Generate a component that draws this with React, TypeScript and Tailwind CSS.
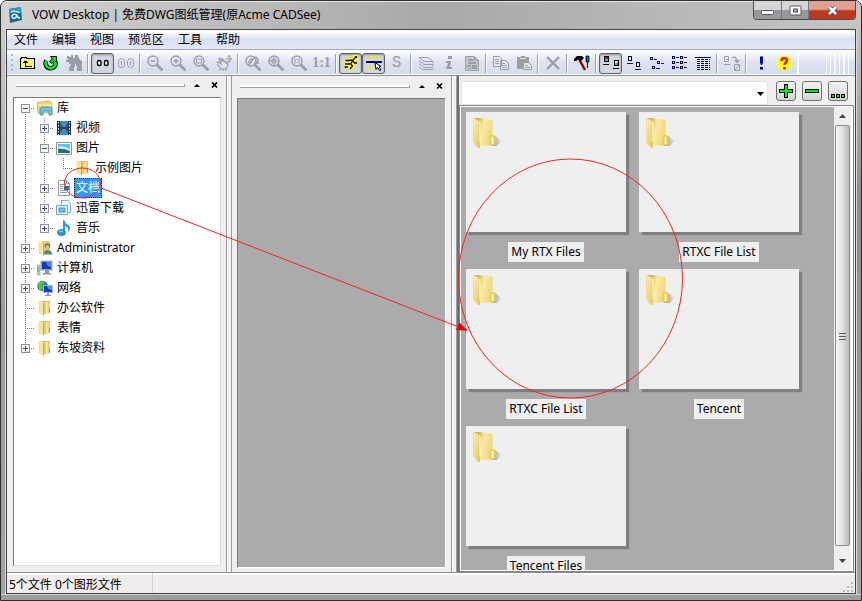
import type { ReactNode } from "react"

const GRAY = "#9c9ea3"
const NAVY = "#000080"

const menus = ["文件", "编辑", "视图", "预览区", "工具", "帮助"]

type TreeItem = {
  name: string
  icon: ReactNode
  lines: string[]
  selected?: boolean
}

type Tool = { label: string; icon: ReactNode; pressed?: boolean }

function Icon({ children, size = 16 }: { children: ReactNode; size?: number }) {
  return (
    <svg width={size} height={size} viewBox="0 0 16 16" fill="none" className="block shrink-0" aria-hidden="true">
      {children}
    </svg>
  )
}

/* Toolbar icons */

function FolderUpIcon() {
  return (
    <Icon>
      <g shapeRendering="crispEdges">
        <path d="M.5 13.500v-10h1v-1h5v1h8v10z" fill="#fff45c" stroke="#000" />
        <path d="M2 5h1v1H2zM9 5h1v1H9zM12 5h1v1h-1zM2 9h1v1H2zM12 9h1v1h-1zM10 7h1v1h-1z" fill="#fff" />
        <path d="M5 6h1v5h6v1H5zM4 6h3v1H4zM3 7h5v1H3z" fill="#000" />
      </g>
    </Icon>
  )
}

function RefreshIcon() {
  return (
    <Icon>
      <path d="M3.500 5.500A5 5 0 1 0 12.500 7" stroke="#000" strokeWidth="4.600" />
      <path d="M7.500 1.500h6v6l-2-2-2.500 3-2.500-2 3-2.500z" fill="#00e82c" stroke="#000" />
      <path d="M3.500 5.500A5 5 0 1 0 12.500 7" stroke="#00e82c" strokeWidth="2.800" />
    </Icon>
  )
}

function BinocularsIcon() {
  return (
    <Icon>
      <path
        d="M1 1h2v1h2V0h2v3h2V0h3l1 4 3 3v9h-5v-5h-1v-2H9v3H8v4H3v-3l2-4H3V7H0V5h2V4H1z"
        fill={GRAY}
        shapeRendering="crispEdges"
      />
    </Icon>
  )
}

function RingsIcon({ color }: { color: string }) {
  const faded = color !== "#000"
  return (
    <Icon>
      {faded ? (
        <g stroke={color}>
          <rect x=".5" y="3.500" width="6" height="9" rx="3" />
          <rect x="9.500" y="3.500" width="6" height="9" rx="3" />
          <path d="M3.500 6v4M12.500 6v4" />
        </g>
      ) : (
        <g stroke={color} strokeWidth="1.400">
          <rect x="2.500" y="5.500" width="3.500" height="5" rx="1.500" fill="#fff" />
          <rect x="9.500" y="5.500" width="3.500" height="5" rx="1.500" fill="#fff" />
        </g>
      )}
    </Icon>
  )
}

function LensIcon({ children }: { children?: ReactNode }) {
  return (
    <Icon>
      <circle cx="6" cy="6" r="5" stroke={GRAY} strokeWidth="1.400" />
      <path d="M9.500 9.500l6 6" stroke={GRAY} strokeWidth="2.800" />
      <g stroke={GRAY}>{children}</g>
    </Icon>
  )
}

function PanIcon() {
  return (
    <Icon>
      <path
        d="M1 8l1-1 3 2-2-5 1-1 2 4M6 7V4h1l1 3M8 7l1-1 1 2 1-1 1 4-2 3H5L1 9"
        stroke={GRAY}
        strokeWidth="1.200"
      />
      <path d="M13 0v8M9.500 4h6.500M11.500 2L13 .5 14.500 2M14.500 2.500L16 4l-1.500 1.500M11.500 6L13 7.500 14.500 6" stroke={GRAY} />
      <path d="M3 15h8" stroke={GRAY} strokeDasharray="2 1" />
    </Icon>
  )
}

function RunnerIcon() {
  return (
    <Icon>
      <path d="M10 0h5v6h-3l1 3-4 6H5v-2H1V9h1V3h7z" fill="#ffff00" stroke="#f4ea00" strokeDasharray="1 1" />
      <path d="M12.500 2.500L10 5 6 5.500H2.500M10 5L7.500 9H2M7.500 8.500l2 2.500L7 14M10 6l1.500 2H14M1.500 12h3.500" stroke={NAVY} strokeWidth="1.300" />
      <path d="M12 1h2v2h-2z" fill={NAVY} />
    </Icon>
  )
}

function RulerIcon() {
  return (
    <Icon>
      <path d="M1 2.500h14M1 12.500h9" stroke="#f4e600" strokeWidth="3" strokeDasharray="1.500 1.500" />
      <path d="M0 6h16v2H0z" fill={NAVY} />
      <path d="M9 7.500l6 4-2 .5 2 3-1.500 .5-2-3-1.500 2z" fill="#fff" stroke="#000" />
    </Icon>
  )
}

function LayersIcon() {
  return (
    <Icon>
      <path
        d="M1 2.500h9l5 4H6zM1 5.500l5 4h9M1 8.500l5 4h9M1 11.500l3 3h11M15 6.500v2M15 9.500v2"
        stroke={GRAY}
      />
    </Icon>
  )
}

function InfoIcon() {
  return (
    <Icon>
      <path d="M7 1h4v3H7zM5 6h5l-1 6h2v2H5v-2h1l1-4H5z" fill={GRAY} />
    </Icon>
  )
}

function SheetIcon() {
  return (
    <Icon>
      <path d="M1.500 1.500h9l4 4v10h-13z" fill="#c3c6cf" stroke={GRAY} />
      <path d="M4 4h5v2H4zM4 7h8v2H4zM3 10h4v2H3zM8 10h5v4H8zM4 13h3v1H4z" fill={GRAY} />
      <path d="M10.500 1.500v4h4" stroke={GRAY} />
    </Icon>
  )
}

function CopyIcon() {
  return (
    <Icon>
      <path d="M.5 1.500h6l2 2v8h-8zM7.500 5.500h5l3 3v6h-8z" fill="#e6e9f4" stroke={GRAY} />
      <path d="M2 4.500h4M2 6.500h4M2 8.500h4M9 8.500h3M9 10.500h5M9 12.500h5" stroke={GRAY} />
    </Icon>
  )
}

function PasteIcon() {
  return (
    <Icon>
      <path d="M1 2h4V1h4v1h4v12H1z" fill={GRAY} />
      <path d="M4 3.500h6" stroke="#e6e9f4" />
      <path d="M7.500 7.500h5l3 3v4h-8z" fill="#e6e9f4" stroke={GRAY} />
      <path d="M9 10.500h3M9 12.500h5" stroke={GRAY} />
    </Icon>
  )
}

function DeleteIcon() {
  return (
    <Icon>
      <path d="M2 2l12 12M14 2L2 14" stroke={GRAY} strokeWidth="2.400" />
    </Icon>
  )
}

function HammerIcon() {
  return (
    <Icon>
      <path d="M5 4l6 11" stroke="#8b0000" strokeWidth="2.400" />
      <path d="M0 6V4l3-3h5l2 2-3 3-2-2-3 2z" fill="#000" />
      <path d="M12 1h3v6h-3z" fill="#008a00" stroke="#000" strokeWidth=".7" />
      <path d="M12.500 2v4" stroke="#0000c0" />
      <path d="M13.500 7v6" stroke="#222" strokeWidth="1.200" />
    </Icon>
  )
}

function ThumbnailsIcon() {
  return (
    <Icon>
      <g shapeRendering="crispEdges">
        <path d="M1.500 1.500h4v5h-4zM11.500 5.500h4v5h-4z" fill="#fff" stroke="#000" />
        <path d="M2 2h3v2H2z" fill="#e00000" />
        <path d="M2 4h3v2H2z" fill="#00d8e8" />
        <path d="M12 8h2v2h-2z" fill="#00d8e8" />
        <path d="M14 7h1v3h-1z" fill="#00a000" />
        <path d="M0 9.500h6M10 13.500h6" stroke="#000" />
      </g>
    </Icon>
  )
}

function LargeIconsIcon() {
  return (
    <Icon>
      <g shapeRendering="crispEdges">
        <path d="M2.500 1.500h3v4h-3zM10.500 7.500h3v4h-3z" fill="#fff" stroke={NAVY} />
        <path d="M1 8.500h6M9 14.500h6" stroke="#222" />
      </g>
    </Icon>
  )
}

function SmallIconsIcon() {
  return (
    <Icon>
      <g shapeRendering="crispEdges">
        <path d="M1.500 2.500h2v2h-2zM8.500 6.500h2v2h-2zM3.500 11.500h2v2h-2z" fill="#fff" stroke={NAVY} />
        <path d="M5 4h3M12 8h3M7 13h4" stroke="#222" />
      </g>
    </Icon>
  )
}

function ListIcon() {
  return (
    <Icon>
      <g shapeRendering="crispEdges">
        <path
          d="M.5 1.500h2v2h-2zM8.500 1.500h2v2h-2zM.5 6.500h2v2h-2zM8.500 6.500h2v2h-2zM.5 11.500h2v2h-2zM8.500 11.500h2v2h-2z"
          fill="#fff"
          stroke={NAVY}
        />
        <path d="M4 2.500h3M12 2.500h3M4 7.500h3M12 7.500h3M4 12.500h3M12 12.500h3" stroke="#222" />
      </g>
    </Icon>
  )
}

function DetailsIcon() {
  return (
    <Icon>
      <g shapeRendering="crispEdges">
        <path d="M0 2h16v1H0z" fill={NAVY} />
        <path d="M2 4.500h13M2 6.500h13M2 8.500h13M2 10.500h13M2 12.500h13M2 14.500h13" stroke="#111" strokeDasharray="3 1" />
      </g>
    </Icon>
  )
}

function ConvertIcon() {
  return (
    <Icon>
      <path d="M.5 1.500h4v5h-4zM10.500 9.500h5v6h-5z" stroke={GRAY} />
      <path d="M2 4.500h2M0 9.500h6M11 15l4-5" stroke={GRAY} />
      <path d="M8 3c3-2 5 0 5 4M10.500 5l2.500 2.500L15.500 5" stroke={GRAY} strokeWidth="1.500" />
    </Icon>
  )
}

function AlertIcon() {
  return (
    <Icon>
      <path d="M7 1.500h3v6l-1 2.500H8L7 7.500zM7 12h3v2.500H7z" fill="#0000a0" />
    </Icon>
  )
}

function HelpIcon() {
  return (
    <Icon>
      <circle cx="8" cy="8" r="7.300" fill="#ffff00" stroke="#fff78a" strokeDasharray="1 1" />
      <path d="M5.500 6c0-4 5.500-3.500 5.500-.5 0 2-2.500 2-2.500 4.500M8.500 12v2.500" stroke="#e81010" strokeWidth="2.400" />
    </Icon>
  )
}

/* Tree icons */

function LibraryIcon() {
  return (
    <Icon>
      <path d="M0 3l1-1h5l1-1h6l1 2h1v10H1z" fill="#f3d56c" stroke="#c9a53c" strokeWidth=".7" />
      <path d="M1 5h14" stroke="#fff3b8" />
      <path d="M3 15V9q0-2 2-2h7q3 0 3 3v5h-3v-4H6v4z" fill="#6cc4ea" stroke="#2e8fc2" strokeWidth=".8" />
    </Icon>
  )
}

function VideoIcon() {
  return (
    <Icon>
      <path d="M1 1h14v14H1z" fill="#26333f" />
      <path d="M4 1h8v14H4z" fill="#2f8fd0" />
      <path d="M4 3l4 5-4 5zM12 3L8 8l4 5z" fill="#1d5b96" />
      <path d="M6 4l2 2 2-2M6 11l2-2 2 2" stroke="#c9734e" />
      <path d="M4 8h8" stroke="#16324d" />
      <path d="M2.500 2v13M13.500 2v13" stroke="#e8eef2" strokeDasharray="1.500 1.500" />
    </Icon>
  )
}

function PictureIcon() {
  return (
    <Icon>
      <path d="M.5 2.500h15v12H.5z" fill="#fff" stroke="#8e979e" />
      <path d="M2 4h12v9H2z" fill="#64bfe9" />
      <path d="M2 7q5-2 12 2v2H2z" fill="#d7f0f8" />
      <path d="M2 9q5-1 12 2v2H2z" fill="#19708b" />
      <path d="M2 9q3-1 6 2H2z" fill="#2b7942" />
    </Icon>
  )
}

function FolderIcon() {
  return (
    <Icon>
      <path d="M4 1h9v12l-6 1z" fill="#dfc463" />
      <path d="M8 2h5v11H8z" fill="#e9d283" />
      <path d="M10 2v11" stroke="#f6e8ae" strokeWidth="1.500" />
      <path d="M1.500 .5L7 2.500v13l-5.500-2z" fill="#f6e49a" />
      <path d="M6.500 2.500v13" stroke="#cfae4c" />
      <path d="M12.500 8.500v4" stroke="#6f9fc4" />
    </Icon>
  )
}

function DocumentIcon() {
  return (
    <Icon>
      <path d="M2.500.5h8l3 3v12h-11z" fill="#fff" stroke="#949ca2" />
      <path d="M4 4.500h6M4 6.500h3M4 8.500h3M4 10.500h8M4 12.500h7" stroke="#7fa69a" />
      <path d="M8 6h5v4H8z" fill="#356f9d" />
      <path d="M10.500.5v3h3" stroke="#949ca2" />
    </Icon>
  )
}

function DownloadIcon() {
  return (
    <Icon>
      <path d="M5.500.5h7l2 3v9h-9z" fill="#e7f4fc" stroke="#89afc8" />
      <path d="M.5 5.500h11v9H.5z" fill="#e3f3fc" stroke="#6aa6c6" />
      <path d="M3 8h6v4H3z" fill="#76bfe5" stroke="#4a93bd" />
    </Icon>
  )
}

function MusicIcon() {
  return (
    <Icon>
      <path d="M7 0l2 1c0 4 5 3 5 7 0 2-1 3-2 4 1-4-1-5-3-6v6H7z" fill="#2d9be0" />
      <ellipse cx="5.500" cy="12.500" rx="4" ry="3" fill="#2d9be0" stroke="#1878b8" />
      <path d="M3 12q2-2 4-.5" stroke="#a8e0fa" />
    </Icon>
  )
}

function UserIcon() {
  return (
    <Icon>
      <path d="M5 1h8v13H5z" fill="#e6d08a" />
      <path d="M1.500.5L7 2.500v13l-5.500-2z" fill="#f6e49a" />
      <path d="M6.500 2.500v13" stroke="#cfae4c" />
      <circle cx="10.500" cy="6" r="2.800" fill="#7d6a50" />
      <circle cx="10.500" cy="7" r="2" fill="#e6b990" />
      <path d="M6.500 14.500q0-4.500 4-4.500t5 4.500z" fill="#4f9273" />
    </Icon>
  )
}

function ComputerIcon() {
  return (
    <Icon>
      <path d="M0 5h3v10H0z" fill="#c5cbcf" stroke="#8b969c" strokeWidth=".6" />
      <path d="M4 1h11v9H4z" fill="#aeb9c2" stroke="#737c84" strokeWidth=".7" />
      <path d="M5 2h9v7H5z" fill="#1437c0" />
      <path d="M9 2h5v5q-4 0-5-5z" fill="#507ee8" />
      <path d="M8 10h4v3H8zM6 13h8v1.500H6z" fill="#8d989f" />
      <path d="M1 7v5" stroke="#45ab55" />
    </Icon>
  )
}

function NetworkIcon() {
  return (
    <Icon>
      <circle cx="5.500" cy="6" r="5.300" fill="#1d77c4" />
      <path d="M1 4q1-3 5-3l2 2-3 2 1 3-2 3Q1 10 1 4z" fill="#5cc53d" />
      <path d="M6.500 5.500h9v7h-9z" fill="#1736c9" stroke="#a7b8c5" />
      <path d="M10 6h5v4q-4 0-5-4z" fill="#5c92ef" />
      <path d="M10 13h2v2h-2zM8 15h6v1H8z" fill="#85959f" />
    </Icon>
  )
}

// One letter per 19px column: "|" trunk, "+" / "-" expander, "t" tee, "L" corner.
// "T" is the first expander of a branch, "E" the last one.
const treeItems: TreeItem[] = [
  { name: "库", icon: <LibraryIcon />, lines: ["T"] },
  { name: "视频", icon: <VideoIcon />, lines: ["|", "+"] },
  { name: "图片", icon: <PictureIcon />, lines: ["|", "-"] },
  { name: "示例图片", icon: <FolderIcon />, lines: ["|", "|", "L"] },
  { name: "文档", icon: <DocumentIcon />, lines: ["|", "+"], selected: true },
  { name: "迅雷下载", icon: <DownloadIcon />, lines: ["|", "+"] },
  { name: "音乐", icon: <MusicIcon />, lines: ["|", "E"] },
  { name: "Administrator", icon: <UserIcon />, lines: ["+"] },
  { name: "计算机", icon: <ComputerIcon />, lines: ["+"] },
  { name: "网络", icon: <NetworkIcon />, lines: ["+"] },
  { name: "办公软件", icon: <FolderIcon />, lines: ["t"] },
  { name: "表情", icon: <FolderIcon />, lines: ["t"] },
  { name: "东坡资料", icon: <FolderIcon />, lines: ["E"] },
]

function TreeCell({ kind }: { kind: string }) {
  const hasBox = "+-TE".includes(kind)
  const collapsed = kind === "+" || kind === "E"
  const top = kind === "T" ? 10 : 0
  const bottom = kind === "E" || kind === "L" ? 10 : 20
  const drawing = (
    <svg width="19" height="20" shapeRendering="crispEdges" className="block" aria-hidden="true">
      <path d={`M9.500 ${top}V${bottom}`} stroke="#808080" strokeDasharray="1 1" />
      {kind !== "|" && <path d="M9 10.500H19" stroke="#808080" strokeDasharray="1 1" />}
      {hasBox && (
        <>
          <rect x="5.500" y="6.500" width="8" height="8" fill="#f8f8f8" stroke="#919191" />
          <path d="M7 10.500h5" stroke="#2b4a9a" />
          {collapsed && <path d="M9.500 8v5" stroke="#2b4a9a" />}
        </>
      )}
    </svg>
  )
  if (!hasBox) return drawing
  return (
    <button type="button" aria-label={collapsed ? "展开" : "折叠"}>
      {drawing}
    </button>
  )
}

function Tree() {
  return (
    <ul className="pl-[2px]">
      {treeItems.map((item) => (
        <li key={item.name} className="flex h-5 items-center">
          {item.lines.map((kind, i) => (
            <TreeCell key={i} kind={kind} />
          ))}
          <span className="flex w-5 justify-center pr-px">{item.icon}</span>
          <span
            className={
              item.selected
                ? "border border-dotted border-[#402000] bg-[#3399ff] px-px leading-[18px] text-white"
                : "px-[2px] leading-5"
            }
          >
            {item.name}
          </span>
        </li>
      ))}
    </ul>
  )
}

const toolGroups: Tool[][] = [
  [
    { label: "向上", icon: <FolderUpIcon /> },
    { label: "刷新", icon: <RefreshIcon /> },
    { label: "查找", icon: <BinocularsIcon /> },
  ],
  [
    { label: "预览", icon: <RingsIcon color="#000" />, pressed: true },
    { label: "双预览", icon: <RingsIcon color={GRAY} /> },
  ],
  [
    { label: "缩小", icon: <LensIcon><path d="M3.500 6h5" strokeWidth="1.500" /></LensIcon> },
    { label: "放大", icon: <LensIcon><path d="M3.500 6h5M6 3.500v5" strokeWidth="1.500" /></LensIcon> },
    { label: "窗口缩放", icon: <LensIcon><path d="M3.500 4h5v4h-5z" /></LensIcon> },
    { label: "平移", icon: <PanIcon /> },
  ],
  [
    { label: "动态缩放", icon: <LensIcon><path d="M3 8l4-5M4 10l5-7M10 2q4 1 3 6l-2-2M9 8l4 0" strokeWidth="1.300" /></LensIcon> },
    { label: "全部显示", icon: <LensIcon><path d="M1 6h10M6 1v10M4 4h4v4H4z" /></LensIcon> },
    { label: "原始大小", icon: <LensIcon><path d="M4 3.500v5M8 3.500v5M6 4v1M6 7v1" /></LensIcon> },
    { label: "1:1", icon: <span className="font-['Liberation_Serif',serif] text-sm leading-4 font-bold text-[#9c9ea3]">1:1</span> },
  ],
  [
    { label: "快速", icon: <RunnerIcon />, pressed: true },
    { label: "线宽", icon: <RulerIcon />, pressed: true },
    { label: "S", icon: <span className="font-['Liberation_Mono',monospace] text-base leading-4 text-[#9c9ea3]">S</span> },
  ],
  [
    { label: "图层", icon: <LayersIcon /> },
    { label: "信息", icon: <InfoIcon /> },
    { label: "布局", icon: <SheetIcon /> },
  ],
  [
    { label: "复制", icon: <CopyIcon /> },
    { label: "粘贴", icon: <PasteIcon /> },
  ],
  [{ label: "删除", icon: <DeleteIcon /> }],
  [{ label: "选项", icon: <HammerIcon /> }],
  [
    { label: "缩略图", icon: <ThumbnailsIcon />, pressed: true },
    { label: "大图标", icon: <LargeIconsIcon /> },
    { label: "小图标", icon: <SmallIconsIcon /> },
    { label: "列表", icon: <ListIcon /> },
    { label: "详细资料", icon: <DetailsIcon /> },
  ],
  [{ label: "转换", icon: <ConvertIcon /> }],
  [
    { label: "关于", icon: <AlertIcon /> },
    { label: "帮助", icon: <HelpIcon /> },
  ],
]

function Toolbar() {
  return (
    <div className="flex h-[26px] shrink-0 items-center border-b border-[#8f9196] bg-linear-to-b from-white via-[#dde2f1] to-[#d6ddee] pt-px shadow-[inset_0_-1px_0_#f4f6fb]">
      <svg width="9" height="22" className="shrink-0" aria-hidden="true">
        <path d="M5 2v20" stroke="#b2b6c2" strokeWidth="2" strokeDasharray="2 3" />
      </svg>
      {toolGroups.map((group, i) => (
        <div key={i} className="flex shrink-0 items-center">
          {group.map((tool) => (
            <button
              key={tool.label}
              type="button"
              aria-label={tool.label}
              className={
                tool.pressed
                  ? "flex h-[21px] w-[23px] items-center justify-center rounded-[3px] border border-[#5d626b] bg-[#d4d7df] shadow-[inset_0_1px_2px_#8d929c]"
                  : "flex h-[21px] w-[23px] items-center justify-center"
              }
            >
              {tool.icon}
            </button>
          ))}
          <span
            className={
              i === toolGroups.length - 1
                ? "mx-[2px] h-[23px] w-[2px] bg-white"
                : "mx-[2px] h-[19px] w-[2px] border-r border-white bg-[#9b9ea6]"
            }
          />
        </div>
      ))}
      <div className="flex h-full flex-1 justify-end gap-[3px] overflow-hidden pr-[6px]">
        <span className="w-px bg-white/70" />
        <span className="w-px bg-white/70" />
        <span className="w-[2px] bg-white/70" />
        <span className="w-px bg-white/80" />
        <span className="w-[2px] bg-white/80" />
        <span className="w-px bg-white" />
      </div>
    </div>
  )
}

function TitleBar() {
  return (
    <header className="flex h-7 shrink-0 items-start bg-linear-to-r from-[#d2d2d2] via-[#a9a9a9] to-[#c4c4c4] pr-[5px] shadow-[inset_0_1px_0_#e8e8e8]">
      <div className="flex h-7 items-center gap-[9px] pl-[7px]">
        <svg width="15" height="16" viewBox="0 0 15 16" fill="none" aria-hidden="true">
          <path d="M1 2l12-2 1 13-12 3z" fill="#16688e" />
          <path d="M1 2l12-2v5Q5 3 1 8z" fill="#3598c2" />
          <path d="M3 5q4-2 9 1" stroke="#bfe9f7" strokeWidth="1.400" />
          <path d="M9 8q-4-2-5 1 0 3 3 2 2-1 2-3 0 3 3 3" stroke="#e7fbff" strokeWidth="1.500" />
        </svg>
        <h1 className="text-xs whitespace-nowrap text-black">VOW Desktop | 免费DWG图纸管理(原Acme CADSee)</h1>
      </div>
      <div className="ml-auto flex h-[19px] overflow-hidden rounded-b-[4px] border border-t-0 border-[#4d4d55]">
        <button
          type="button"
          aria-label="最小化"
          className="flex w-7 items-center justify-center border-r border-[#77777d] bg-linear-to-b from-[#d5d5d6] from-50% to-[#98989b] to-50% pt-[5px]"
        >
          <svg width="13" height="6" aria-hidden="true">
            <rect x=".5" y=".5" width="12" height="4" rx="1" fill="#fff" stroke="#55586a" />
          </svg>
        </button>
        <button
          type="button"
          aria-label="最大化"
          className="flex w-[27px] items-center justify-center border-r border-[#77777d] bg-linear-to-b from-[#d5d5d6] from-50% to-[#98989b] to-50%"
        >
          <svg width="13" height="11" fill="none" aria-hidden="true">
            <rect x="1" y="1" width="11" height="9" rx="1" fill="#fff" stroke="#55586a" />
            <rect x="4.500" y="4" width="4" height="3" fill="#aaa" stroke="#55586a" />
          </svg>
        </button>
        <button
          type="button"
          aria-label="关闭"
          className="flex w-[46px] items-center justify-center bg-linear-to-b from-[#e3a193] from-45% to-[#b93a20] to-55%"
        >
          <svg width="13" height="11" fill="none" aria-hidden="true">
            <path d="M3 2l7 7M10 2L3 9" stroke="#554a5c" strokeWidth="4.500" />
            <path d="M3 2l7 7M10 2L3 9" stroke="#fff" strokeWidth="2.600" />
          </svg>
        </button>
      </div>
    </header>
  )
}

function PaneHeader() {
  return (
    <div className="flex h-[21px] shrink-0 items-center px-[3px] pb-[3px]">
      <span className="h-[3px] flex-1 border-r border-b border-[#a0a0a0] bg-white" />
      <button type="button" aria-label="收起" className="ml-2 flex w-2 justify-center">
        <svg width="6" height="3" aria-hidden="true">
          <path d="M0 3l3-3 3 3z" fill="#000" />
        </svg>
      </button>
      <button type="button" aria-label="关闭窗格" className="ml-[9px] flex w-2 justify-center">
        <svg width="7" height="6" aria-hidden="true">
          <path d="M1 .5l5 5M6 .5l-5 5" stroke="#000" strokeWidth="1.600" />
        </svg>
      </button>
    </div>
  )
}

function Splitter() {
  return <div className="w-[6px] shrink-0 border-x border-[#9d9d9d] bg-[#f2f2f2] shadow-[inset_1px_0_0_#fff]" />
}

function BigFolder() {
  return (
    <svg width="32" height="34" viewBox="0 0 32 34" fill="none" aria-hidden="true">
      <defs>
        <linearGradient id="front" x1="0" x2="1" y1="0" y2="1">
          <stop stopColor="#fdf3bb" />
          <stop offset="1" stopColor="#e6c455" />
        </linearGradient>
        <linearGradient id="back" x1="0" x2="1" y1="0" y2=".3">
          <stop offset=".2" stopColor="#d2b04c" />
          <stop offset=".55" stopColor="#f9eaa6" />
          <stop offset="1" stopColor="#efd97c" />
        </linearGradient>
        <linearGradient id="shade" x1="0" x2="1">
          <stop stopColor="#8c8c8c" />
          <stop offset="1" stopColor="#efefef" />
        </linearGradient>
      </defs>
      <path d="M19 29l4-10 7 5-5 5z" fill="url(#shade)" />
      <path d="M2 1h6l12.500 2v25L8 29z" fill="url(#back)" />
      <path d="M17.500 20q0-2 3-2t3 2v7l-3 2-3-1z" fill="#ecce52" />
      <path d="M20.500 20v7" stroke="#fffef0" strokeWidth="1.600" />
      <path d="M1 .5l7 4v26.500H6L1 25z" fill="url(#front)" />
      <path d="M1.500 1v24l5 6" stroke="#efd98a" strokeWidth=".8" />
      <path d="M8 5v20" stroke="#fff9d8" />
    </svg>
  )
}

const files = ["My RTX Files", "RTXC File List", "RTXC File List", "Tencent", "Tencent Files"]

function FileGrid() {
  return (
    <ul className="flex flex-1 flex-wrap content-start gap-x-[13px] gap-y-[7px] overflow-hidden pt-[5px] pl-[5px]">
      {files.map((name, i) => (
        <li key={i} className="flex w-40 flex-col items-center gap-[10px]">
          <div className="h-[120px] w-full bg-[#efefef] pt-[5px] pl-[6px] shadow-[3px_3px_1px_#7f7f7f]">
            <BigFolder />
          </div>
          <span className="bg-[#efefef] px-[3px] leading-5">{name}</span>
        </li>
      ))}
    </ul>
  )
}

function ScrollBar() {
  return (
    <div className="flex w-[18px] shrink-0 flex-col border-r border-white bg-[#efefef]">
      <button type="button" aria-label="向上滚动" className="flex h-[18px] items-center justify-center">
        <svg width="7" height="4" aria-hidden="true">
          <path d="M0 4l3.500-4L7 4z" fill="#444" />
        </svg>
      </button>
      <div className="mx-px flex flex-1 items-center justify-center rounded-[2px] border border-[#8d8d8d] bg-linear-to-r from-[#f6f6f6] via-[#dedfe1] to-[#b9babf]">
        <svg width="7" height="8" aria-hidden="true">
          <path d="M0 1.500h7M0 4.500h7M0 7.500h7" stroke="#5e5e5e" />
        </svg>
      </div>
      <button type="button" aria-label="向下滚动" className="flex h-6 items-center justify-center pt-[10px] pb-1">
        <svg width="7" height="4" aria-hidden="true">
          <path d="M0 0h7L3.500 4z" fill="#444" />
        </svg>
      </button>
    </div>
  )
}

const squareButton =
  "flex size-5 items-center justify-center rounded-[3px] border border-[#707070] bg-linear-to-b from-[#f4f4f4] to-[#d4d4d4]"

function BrowserPane() {
  return (
    <section className="flex min-w-0 flex-1 flex-col border-l-2 border-[#6f7072]">
      <div className="flex h-[29px] shrink-0 items-start pt-[5px] pr-[7px] pl-[2px]">
        <div className="relative mr-2 h-6 flex-1">
          <select aria-label="路径" className="h-6 w-full appearance-none border border-[#e3e3ea] bg-white px-1">
            <option></option>
          </select>
          <svg width="7" height="4" className="pointer-events-none absolute top-[11px] right-1" aria-hidden="true">
            <path d="M0 0h7L3.500 4z" fill="#000" />
          </svg>
        </div>
        <div className="flex gap-[6px]">
          <button type="button" aria-label="添加" className={squareButton}>
            <svg width="16" height="16" shapeRendering="crispEdges" aria-hidden="true">
              <path d="M6.500 1.500h3v5h5v3h-5v5h-3v-5h-5v-3h5z" fill="#00f000" stroke="#000" />
            </svg>
          </button>
          <button type="button" aria-label="移除" className={squareButton}>
            <svg width="16" height="16" shapeRendering="crispEdges" aria-hidden="true">
              <path d="M1.500 6.500h13v3h-13z" fill="#00f000" stroke="#000" />
            </svg>
          </button>
          <button type="button" aria-label="更多" className={squareButton}>
            <svg width="16" height="16" shapeRendering="crispEdges" aria-hidden="true">
              <path d="M1.500 11.500h3v3h-3zM6.500 11.500h3v3h-3zM11.500 11.500h3v3h-3z" fill="#00f000" stroke="#000" />
            </svg>
          </button>
        </div>
      </div>
      <div className="mr-px flex min-h-0 flex-1 border border-[#82838b]">
        <div className="flex min-w-0 flex-1 border border-white bg-[#ababab]">
          <FileGrid />
          <ScrollBar />
        </div>
      </div>
    </section>
  )
}

// Red marks that lead from the selected folder to its contents
function Annotations() {
  return (
    <svg
      width="862"
      height="601"
      fill="none"
      stroke="#f52222"
      className="pointer-events-none absolute top-0 left-0"
      aria-hidden="true"
    >
      <ellipse cx="81.500" cy="182" rx="18" ry="15" />
      <path d="M100 187L459 326.500" />
      <path d="M467 330l-12-1 3.500-7.500z" fill="#f00000" stroke="none" />
      <ellipse cx="569.500" cy="277.500" rx="112" ry="119.500" />
    </svg>
  )
}

export default function App() {
  return (
    <div className="relative flex h-screen w-full flex-col overflow-hidden rounded-t-[7px] border border-[#2e2e2e] bg-[#a2a2a2] font-['Noto_Sans','Noto_Sans_CJK_SC',sans-serif] text-xs text-black">
      <TitleBar />
      <div className="flex min-h-0 flex-1">
        <div className="w-[5px] shrink-0 border-r border-[#dcdcdc] bg-linear-to-b from-[#c9c9c9] via-[#9a9a9a] to-[#a2a2a2]" />
        <div className="flex min-w-0 flex-1 flex-col border border-[#3f4248] bg-[#efefef]">
          <nav className="flex h-5 shrink-0 items-center border-b border-[#a5a9b8] bg-linear-to-b from-white from-10% via-[#d9dff0] via-50% to-[#e3e8f6] pt-px">
            {menus.map((menu) => (
              <button key={menu} type="button" className="px-[7px] leading-[18px]">
                {menu}
              </button>
            ))}
          </nav>
          <Toolbar />
          <main className="flex min-h-0 flex-1">
            <aside className="flex w-[219px] shrink-0 flex-col pr-[5px] pb-[6px] pl-[6px]">
              <PaneHeader />
              <div className="min-h-0 flex-1 overflow-hidden border border-[#dcdcdc] border-t-[#777] border-l-[#777] bg-white">
                <Tree />
              </div>
            </aside>
            <Splitter />
            <section className="flex w-[219px] shrink-0 flex-col px-[5px] pt-px pb-1">
              <PaneHeader />
              <div className="min-h-0 flex-1 border border-white border-t-[#777] border-l-[#777] bg-[#ababab]" />
            </section>
            <Splitter />
            <BrowserPane />
          </main>
          <footer className="flex h-[21px] shrink-0 items-center border-t border-[#8c8c8c] bg-[#f0ecec] shadow-[inset_0_2px_0_#fff]">
            <p className="w-[146px] border-r border-[#d4d0d0] pt-[3px] pl-[2px] leading-[17px] whitespace-nowrap">
              5个文件 0个图形文件
            </p>
            <svg width="12" height="12" className="mt-auto mr-px ml-auto" aria-hidden="true">
              <path
                d="M9 1h2v2H9zM9 5h2v2H9zM9 9h2v2H9zM5 5h2v2H5zM5 9h2v2H5zM1 9h2v2H1z"
                fill="#bdb9b9"
              />
            </svg>
          </footer>
        </div>
        <div className="w-[5px] shrink-0 border-l border-[#dcdcdc] bg-linear-to-b from-[#c4c4c4] from-0% via-[#8f8a92] via-30% to-[#a2a2a2]" />
      </div>
      <div className="h-[6px] shrink-0 border-t border-[#d0d0d0] bg-[#9c9c9c]" />
      <Annotations />
    </div>
  )
}
